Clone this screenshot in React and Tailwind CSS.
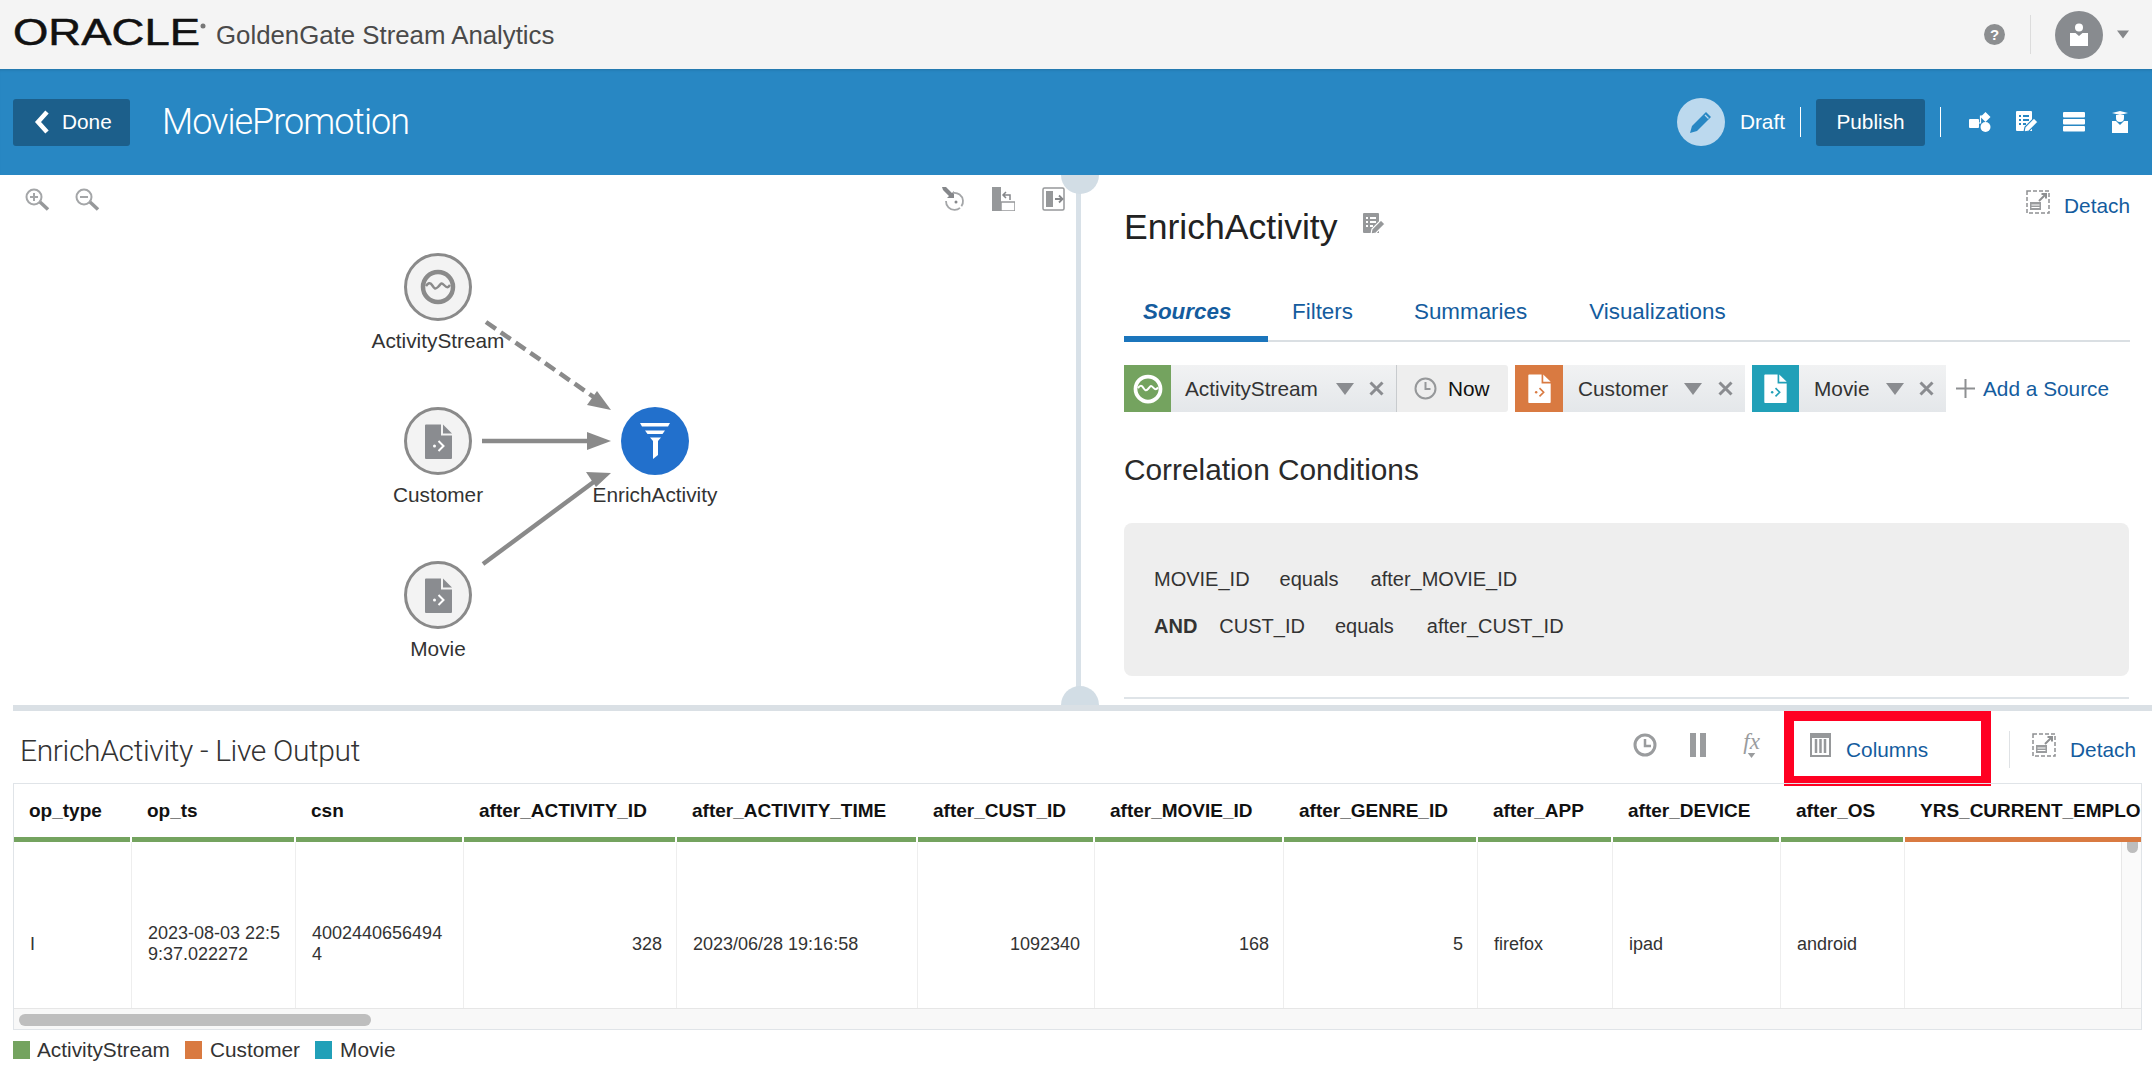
import React from "react";

const columns = [
  { name: "op_type", value: "I", bar: "bg-[#74a35f]" },
  { name: "op_ts", value: "2023-08-03 22:59:37.022272", bar: "bg-[#74a35f]" },
  { name: "csn", value: "40024406564944", bar: "bg-[#74a35f]" },
  { name: "after_ACTIVITY_ID", value: "328", right: true, bar: "bg-[#74a35f]" },
  { name: "after_ACTIVITY_TIME", value: "2023/06/28 19:16:58", bar: "bg-[#74a35f]" },
  { name: "after_CUST_ID", value: "1092340", right: true, bar: "bg-[#74a35f]" },
  { name: "after_MOVIE_ID", value: "168", right: true, bar: "bg-[#74a35f]" },
  { name: "after_GENRE_ID", value: "5", right: true, bar: "bg-[#74a35f]" },
  { name: "after_APP", value: "firefox", bar: "bg-[#74a35f]" },
  { name: "after_DEVICE", value: "ipad", bar: "bg-[#74a35f]" },
  { name: "after_OS", value: "android", bar: "bg-[#74a35f]" },
  { name: "YRS_CURRENT_EMPLOYER", value: "", bar: "bg-[#d97a41]" },
];

const StreamIcon = ({ size = 36, color = "#8a8a8a" }) => (
  <svg width={size} height={size} viewBox="0 0 36 36" fill="none" stroke={color}>
    <circle cx="18" cy="18" r="15" strokeWidth="4.5" />
    <path d="M6 17c2-3 4-4 6-1s3 5 6 2 3-5 6-2 4 3 6 0" strokeWidth="2.4" />
  </svg>
);

const FileIcon = ({ w = 27, h = 35, color = "#8a8c90", accent = "#fff" }) => (
  <svg width={w} height={h} viewBox="0 0 27 35">
    <path d="M0 1.500a1 1 0 011-1h15v11h11v22.500a1 1 0 01-1 1H1a1 1 0 01-1-1z" fill={color} />
    <path d="M18 .5l9 9h-9z" fill={color} />
    <path d="M13.500 17l5 5-5 5" fill="none" stroke={accent} strokeWidth="2" />
    <circle cx="9.500" cy="22" r="1.500" fill={accent} />
  </svg>
);

const FunnelIcon = () => (
  <svg width="30" height="36" viewBox="0 0 30 36" fill="#fff">
    <path d="M0 0h30l-2 3.500H2z" />
    <path d="M5 7.500h20l-2.500 3.500h-15z" />
    <path d="M10 14.500h11l-3 3.500v14l-5 4V18z" />
  </svg>
);

const Caret = ({ w = 18, h = 12, color = "#8a8c90" }) => (
  <svg width={w} height={h} viewBox="0 0 18 12">
    <path d="M0 0h18l-9 12z" fill={color} />
  </svg>
);

const Cross = () => (
  <svg width="15" height="15" viewBox="0 0 15 15">
    <path d="M1.500 1.500l12 12M13.500 1.500l-12 12" stroke="#8a8c90" strokeWidth="3" />
  </svg>
);

const ZoomGlyph = ({ plus }) => (
  <svg width="25" height="23" viewBox="0 0 25 23" fill="none">
    <circle cx="9" cy="9" r="7.500" stroke="#a4a6a8" strokeWidth="2" />
    <path d="M5 9h8" stroke="#a4a6a8" strokeWidth="2" />
    {plus && <path d="M9 5v8" stroke="#a4a6a8" strokeWidth="2" />}
    <path d="M15 14l8 7.500" stroke="#96989a" strokeWidth="3.500" />
  </svg>
);

const DetachIcon = () => (
  <svg width="24" height="24" viewBox="0 0 24 24" fill="none">
    <rect x="1" y="1" width="22" height="22" stroke="#8e9092" strokeWidth="1.500" strokeDasharray="4 2" />
    <rect x="4" y="12" width="11" height="8" fill="#9a9c9e" />
    <path d="M5.500 15h8M5.500 17.500h8" stroke="#fff" strokeWidth="1" />
    <path d="M13 11l7-7M15.500 4H20v4.500" stroke="#8e9092" strokeWidth="2" />
  </svg>
);

const ListEdit = ({ color = "#fff", bg = "#2887c3", size = 22 }) => (
  <svg width={size} height={size} viewBox="0 0 22 22">
    <path d="M1 0h14a1 1 0 011 1v19H1a1 1 0 01-1-1V1a1 1 0 011-1z" fill={color} />
    <path d="M3 5h2M7 5h6M3 9h2M7 9h6M3 13h2M7 13h3" stroke={bg} strokeWidth="1.800" />
    <path d="M8 21l1-5 9-9 4 4-9 9z" fill={color} stroke={bg} strokeWidth="1.200" />
  </svg>
);

function App() {
  return (
    <div className="w-[2152px] h-[1068px] overflow-hidden bg-white flex flex-col text-[#333] font-['Liberation_Sans',Arial,sans-serif]">
      {/* Top bar */}
      <header className="h-[69px] shrink-0 bg-[#f4f4f4] flex items-center">
        <svg width="205" height="44" viewBox="0 0 205 44" className="ml-[13px] shrink-0">
          <text x="0" y="32" fontSize="36" fontFamily="Liberation Sans" textLength="187" lengthAdjust="spacingAndGlyphs" fill="#111" stroke="#111" strokeWidth="0.5">
            ORACLE
          </text>
          <circle cx="190" cy="13" r="2.500" fill="#777" />
        </svg>
        <span className="ml-[-2px] text-[25.800px] leading-[32px] text-[#4a4a4a]">GoldenGate Stream Analytics</span>
        <div className="ml-auto flex items-center">
          <span className="w-[21px] h-[21px] rounded-full bg-[#8c8e90] text-white text-[15px] font-bold leading-[21px] text-center">?</span>
          <div className="w-px h-[39px] bg-[#dcdcdc] ml-[25px]" />
          <div className="ml-[24px] w-[48px] h-[48px] rounded-full bg-[#888b8f] flex items-center justify-center">
            <svg width="18" height="24" viewBox="0 0 18 24" fill="#fff">
              <circle cx="9" cy="4.500" r="4" />
              <path d="M0 10h5.500l3.500 3 3.500-3H18v13H0z" />
            </svg>
          </div>
          <div className="ml-[14px] mr-[23px]">
            <Caret w={12} h={9} color="#85878a" />
          </div>
        </div>
      </header>

      {/* Blue toolbar */}
      <div className="h-[106px] shrink-0 bg-[#2887c3] shadow-[inset_0_3px_3px_-2px_rgba(0,0,0,0.15)] flex items-center text-white">
        <button className="ml-[13px] w-[117px] h-[47px] rounded-[3px] bg-[#1c5f8b] flex items-center text-[20.800px]">
          <svg width="16" height="24" viewBox="0 0 16 24" fill="none" className="ml-[21px]">
            <path d="M13 2L4 12l9 10" stroke="#fff" strokeWidth="4.500" />
          </svg>
          <span className="ml-[12px]">Done</span>
        </button>
        <h1 className="ml-[32px] text-[36px] leading-[44px] tracking-[-1px] font-light font-['Roboto',sans-serif]">MoviePromotion</h1>

        <div className="ml-auto flex items-center">
          <div className="w-[48px] h-[48px] rounded-full bg-[#bcd9ee] flex items-center justify-center">
            <svg width="24" height="24" viewBox="0 0 24 24" fill="#2887c3">
              <path d="M1 23l2-7L17 2l5 5L8 21z" />
              <path d="M16 5l3.500 3.500" stroke="#bcd9ee" strokeWidth="1.200" />
            </svg>
          </div>
          <span className="ml-[15px] text-[20.800px]">Draft</span>
          <div className="ml-[15px] w-px h-[30px] bg-white" />
          <button className="ml-[15px] w-[109px] h-[47px] rounded-[3px] bg-[#1c5f8b] text-[20.800px]">Publish</button>
          <div className="ml-[15px] w-px h-[30px] bg-white" />
          <svg width="22" height="20" viewBox="0 0 22 20" fill="#fff" className="ml-[28px]">
            <rect x="0" y="7" width="10" height="9" rx="1" />
            <path d="M16.500 0l5 5-5 5-5-5z" />
            <circle cx="16.500" cy="15" r="5" />
            <path d="M8 11h3.500V4h2" fill="none" stroke="#fff" strokeWidth="1.200" />
          </svg>
          <div className="ml-[25px]">
            <ListEdit />
          </div>
          <svg width="22" height="20" viewBox="0 0 22 20" fill="#fff" className="ml-[25px]">
            <rect y="0" width="22" height="5.500" rx="1" />
            <rect y="7" width="22" height="5.500" rx="1" />
            <rect y="14" width="22" height="5.500" rx="1" />
          </svg>
          <svg width="16" height="22" viewBox="0 0 16 22" fill="#fff" className="ml-[27px] mr-[24px]">
            <path d="M0 2l8-2 8 2-8 2z" />
            <path d="M4 4h8v3a4 4 0 01-8 0z" />
            <path d="M0 10h4l4 4 4-4h4v12H0z" />
          </svg>
        </div>
      </div>

      {/* Split area */}
      <div className="h-[530px] shrink-0 flex">
        {/* Pipeline canvas */}
        <div className="relative w-[1076px] shrink-0">
          <div className="absolute left-[25px] top-[13px] flex gap-[25px]">
            <ZoomGlyph plus />
            <ZoomGlyph />
          </div>
          <div className="absolute left-[942px] top-[12px] flex gap-[27px]">
            <svg width="23" height="24" viewBox="0 0 23 24" fill="none">
              <path d="M0 0h4l6 6 2-2v7H5l2-2-6-6z" fill="#85878a" />
              <path d="M11 6a8.500 8.500 0 11-7 8" stroke="#a4a6a8" strokeWidth="1.800" strokeDasharray="20 2" />
              <circle cx="14" cy="15" r="1.500" fill="#85878a" />
            </svg>
            <svg width="23" height="24" viewBox="0 0 23 24" fill="none">
              <path d="M0 0h9v24H0z" fill="#96989a" />
              <path d="M9 15h14v9H9z" stroke="#96989a" strokeWidth="1.500" />
              <path d="M14 5l-3 3 3 3M11.500 8H18v5" stroke="#85878a" strokeWidth="1.500" />
            </svg>
            <svg width="23" height="24" viewBox="0 0 23 24" fill="none">
              <rect x="1" y="1" width="21" height="22" rx="1.500" stroke="#96989a" strokeWidth="1.500" />
              <rect x="4" y="4" width="7" height="16" fill="#96989a" />
              <path d="M13 12h7M17 8.500l3.500 3.500-3.500 3.500" stroke="#85878a" strokeWidth="1.800" />
            </svg>
          </div>

          <svg width="1076" height="530" className="absolute left-0 top-0">
            <path d="M486 147l112 78" stroke="#8a8a8a" strokeWidth="4.500" strokeDasharray="12 6" fill="none" />
            <path d="M611 235l-24-5 10-14z" fill="#8a8a8a" />
            <path d="M482 266h112" stroke="#8a8a8a" strokeWidth="4.500" fill="none" />
            <path d="M611 266l-24-9v18z" fill="#8a8a8a" />
            <path d="M483 389l112-83" stroke="#8a8a8a" strokeWidth="4.500" fill="none" />
            <path d="M611 298l-25-1 10 15z" fill="#8a8a8a" />
          </svg>

          {[
            { label: "ActivityStream", cx: "left-[338px] top-[78px]", icon: <StreamIcon /> },
            { label: "Customer", cx: "left-[338px] top-[232px]", icon: <FileIcon /> },
            { label: "Movie", cx: "left-[338px] top-[386px]", icon: <FileIcon /> },
          ].map((n) => (
            <div key={n.label} className={`absolute w-[200px] flex flex-col items-center ${n.cx}`}>
              <div className="w-[68px] h-[68px] rounded-full border-[3px] border-[#8a8a8a] bg-[#f3f3f3] flex items-center justify-center">
                {n.icon}
              </div>
              <span className="mt-[8px] text-[20.800px] leading-[24px]">{n.label}</span>
            </div>
          ))}
          <div className="absolute left-[555px] top-[232px] w-[200px] flex flex-col items-center">
            <div className="w-[68px] h-[68px] rounded-full bg-[#2270cc] flex items-center justify-center">
              <FunnelIcon />
            </div>
            <span className="mt-[8px] text-[20.800px] leading-[24px]">EnrichActivity</span>
          </div>
        </div>

        {/* Vertical splitter */}
        <div className="relative w-[5px] shrink-0 bg-[#d8e1e8]">
          <div className="absolute left-[-15px] top-0 w-[38px] h-[19px] rounded-b-full bg-[#d2dde5]" />
          <div className="absolute left-[-15px] bottom-0 w-[38px] h-[19px] rounded-t-full bg-[#d2dde5]" />
        </div>

        {/* Detail panel */}
        <div className="flex-1 pl-[43px] pr-[22px] overflow-hidden">
          <div className="h-[72px] flex items-start">
            <h2 className="mt-[32px] text-[35.600px] leading-[40px] text-[#222]">EnrichActivity</h2>
            <div className="mt-[38px] ml-[25px]">
              <ListEdit color="#96989a" bg="#fff" />
            </div>
            <div className="ml-auto mt-[15px] flex items-start text-[20.800px] leading-[24px] text-[#145c9e]">
              <DetachIcon />
              <span className="ml-[14px] mt-[4px]">Detach</span>
            </div>
          </div>

          <div className="mt-[35px] h-[60px] pt-[2px] flex items-center border-b-[2px] border-[#dadfe3] text-[22.400px] text-[#145c9e]">
            <div className="self-end w-[144px] h-[60px] pl-[19px] pt-[6px] flex items-center border-b-[6px] border-[#1b75bc] mb-[-2px] font-bold italic">Sources</div>
            <span className="ml-[24px]">Filters</span>
            <span className="ml-[61px]">Summaries</span>
            <span className="ml-[62px]">Visualizations</span>
          </div>

          {/* Source chips */}
          <div className="mt-[23px] h-[47px] flex text-[20.800px]">
            <div className="w-[47px] bg-[#74a35f] flex items-center justify-center">
              <StreamIcon size={30} color="#fff" />
            </div>
            <div className="w-[225px] bg-linear-to-b from-[#f1f2f3] to-[#e4e7ea] flex items-center pl-[14px]">
              <span className="w-[151px]">ActivityStream</span>
              <Caret />
              <div className="ml-[15px]"><Cross /></div>
            </div>
            <div className="w-[112px] rounded-r-[3px] bg-[#eeeeee] border-l border-[#c8cbce] flex items-center pl-[17px]">
              <svg width="23" height="23" viewBox="0 0 23 23" fill="none" stroke="#96989a" strokeWidth="2">
                <circle cx="11.500" cy="11.500" r="10" />
                <path d="M11.500 5v7h5" />
              </svg>
              <span className="ml-[11px] text-[#111]">Now</span>
            </div>
            <div className="ml-[7px] w-[48px] bg-[#d97a41] flex items-center justify-center">
              <FileIcon w={23} h={29} color="#fff" accent="#d97a41" />
            </div>
            <div className="w-[182px] bg-linear-to-b from-[#f1f2f3] to-[#e4e7ea] flex items-center pl-[15px]">
              <span className="w-[106px]">Customer</span>
              <Caret />
              <div className="ml-[16px]"><Cross /></div>
            </div>
            <div className="ml-[7px] w-[47px] bg-[#21a0b8] flex items-center justify-center">
              <FileIcon w={23} h={29} color="#fff" accent="#21a0b8" />
            </div>
            <div className="w-[147px] bg-linear-to-b from-[#f1f2f3] to-[#e4e7ea] flex items-center pl-[15px]">
              <span className="w-[72px]">Movie</span>
              <Caret />
              <div className="ml-[15px]"><Cross /></div>
            </div>
            <div className="ml-[10px] flex items-center text-[#145c9e]">
              <svg width="19" height="19" viewBox="0 0 19 19">
                <path d="M9.500 0v19M0 9.500h19" stroke="#8e9092" strokeWidth="2" />
              </svg>
              <span className="ml-[8px]">Add a Source</span>
            </div>
          </div>

          <h3 className="mt-[38px] text-[29.800px] leading-[40px] text-[#2a2a2a]">Correlation Conditions</h3>

          <div className="mt-[33px] w-[1005px] h-[153px] rounded-[8px] bg-[#eeeeee] pl-[30px] pt-[44px] text-[20px] leading-[24px]">
            <div className="flex">
              <span>MOVIE_ID</span>
              <span className="ml-[30px]">equals</span>
              <span className="ml-[32px]">after_MOVIE_ID</span>
            </div>
            <div className="flex mt-[23px]">
              <span className="font-bold">AND</span>
              <span className="ml-[22px]">CUST_ID</span>
              <span className="ml-[30px]">equals</span>
              <span className="ml-[33px]">after_CUST_ID</span>
            </div>
          </div>
          <div className="mt-[21px] w-[1005px] h-[2px] bg-[#dfe4e8]" />
        </div>
      </div>

      {/* Horizontal splitter */}
      <div className="h-[6px] shrink-0 ml-[13px] bg-[#dae0e5]" />

      {/* Live output toolbar */}
      <div className="relative h-[72px] shrink-0 flex items-center">
        <h2 className="ml-[20px] mt-[8px] text-[30px] leading-[36px] tracking-[-0.36px] font-light font-['Roboto',sans-serif] text-[#333]">EnrichActivity - Live Output</h2>
        <div className="ml-auto mr-[16px] mb-[4px] flex items-center">
          <svg width="24" height="24" viewBox="0 0 24 24" fill="none" stroke="#9a9c9e" strokeWidth="3">
            <circle cx="12" cy="12" r="10" />
            <path d="M12 6v7h6" strokeWidth="2.500" />
          </svg>
          <svg width="16" height="24" viewBox="0 0 16 24" fill="#9a9c9e" className="ml-[33px]">
            <rect width="6" height="24" />
            <rect x="10" width="6" height="24" />
          </svg>
          <div className="ml-[34px] w-[23px] h-[28px] flex flex-col items-center">
            <span className="font-['Liberation_Serif',serif] italic text-[23px] leading-[22px] text-[#9a9c9e]">fx</span>
            <Caret w={9} h={5} color="#9a9c9e" />
          </div>
          <svg width="21" height="24" viewBox="0 0 21 24" fill="none" stroke="#96989a" className="ml-[47px]">
            <rect x="1" y="1" width="19" height="22" strokeWidth="2" />
            <path d="M1 3.500h19" strokeWidth="3" />
            <path d="M6 6v14M10.500 6v14M15 6v14" strokeWidth="2.500" />
          </svg>
          <span className="ml-[15px] mt-[10px] w-[163px] text-[20.800px] text-[#145c9e]">Columns</span>
          <div className="mt-[8px] w-px h-[37px] bg-[#dfe2e5]" />
          <div className="ml-[22px]"><DetachIcon /></div>
          <span className="ml-[14px] mt-[10px] text-[20.800px] text-[#145c9e]">Detach</span>
        </div>
        {/* Red annotation round the Columns button */}
        <div className="absolute left-[1784px] top-0 w-[207px] h-[75px] border-[10px] border-[#ff0022]" />
      </div>

      {/* Results table */}
      <div className="relative ml-[13px] w-[2129px] h-[247px] shrink-0 border border-[#e0e4e8] overflow-hidden">
        <div className="grid w-[2300px] grid-cols-[118px_164px_168px_213px_241px_177px_189px_194px_135px_168px_124px_340px]">
          {columns.map((c) => (
            <div key={c.name} className="h-[58px] flex flex-col">
              <div className="h-[53px] pl-[15px] pt-[2px] flex items-center text-[19px] font-bold text-[#111] whitespace-nowrap">{c.name}</div>
              <div className={`h-[5px] mr-[2px] ${c.bar}`} />
            </div>
          ))}
          {columns.map((c) => (
            <div key={c.name} className={`h-[166px] flex items-center border-r border-[#eeeeee] pl-[16px] pr-[14px] pt-[38px] text-[18px] leading-[21px] break-all ${c.right ? "justify-end" : ""}`}>
              <span>{c.value}</span>
            </div>
          ))}
        </div>
        <div className="absolute left-[2107px] top-[58px] w-[21px] h-[166px] bg-[#fafafa] border-l border-[#e8e8e8]">
          <div className="ml-[5px] w-[11px] h-[11px] rounded-b-full bg-[#bdbdbd]" />
        </div>
        <div className="h-[22px] bg-[#f8f8f8] border-t border-[#e6e6e6] flex items-center">
          <div className="ml-[5px] w-[352px] h-[12px] rounded-full bg-[#bebebe]" />
        </div>
      </div>

      {/* Legend */}
      <div className="mt-[11px] ml-[13px] flex items-center text-[20.800px] leading-[18px] text-[#333]">
        <span className="w-[17px] h-[18px] bg-[#74a35f]" />
        <span className="ml-[7px]">ActivityStream</span>
        <span className="ml-[15px] w-[17px] h-[18px] bg-[#d97a41]" />
        <span className="ml-[8px]">Customer</span>
        <span className="ml-[15px] w-[17px] h-[18px] bg-[#21a0b8]" />
        <span className="ml-[8px]">Movie</span>
      </div>
    </div>
  );
}

export default App;
